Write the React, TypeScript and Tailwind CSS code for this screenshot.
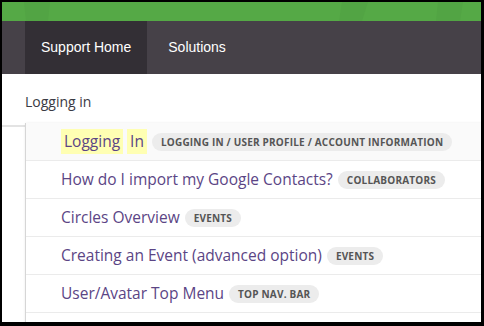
import React from "react";

const results = [
  { title: ["Logging", "In"], tag: "LOGGING IN / USER PROFILE / ACCOUNT INFORMATION", active: true },
  { title: "How do I import my Google Contacts?", tag: "COLLABORATORS" },
  { title: "Circles Overview", tag: "EVENTS" },
  { title: "Creating an Event (advanced option)", tag: "EVENTS" },
  { title: "User/Avatar Top Menu", tag: "TOP NAV. BAR" },
];

function Tag({ label }: { label: string }) {
  return (
    <span className="ml-[5px] rounded-full bg-[#ececec] px-[9px] py-[2px] text-[10px] font-bold leading-[14px] tracking-[0.2px] text-[#555]">
      {label}
    </span>
  );
}

export default function App() {
  return (
    <div className="h-[326px] w-[484px] overflow-hidden border-b-[4px] border-l-2 border-r-[3px] border-t-2 border-black bg-white font-['Open_Sans',sans-serif]">
      {/* green band */}
      <div className="h-[19px] bg-[#55a946]">
        <svg width="479" height="19" className="block">
          <polygon points="22,0 48,0 46,19 24,19" fill="#52a444" />
          <polygon points="340,0 366,0 360,19 337,19" fill="#52a444" />
          <polygon points="436,0 461,0 458,19 434,19" fill="#52a444" />
        </svg>
      </div>

      {/* nav */}
      <nav className="flex h-[53px] bg-[#464148] pl-[23px] font-['Liberation_Sans',Arial,sans-serif] text-[14px] text-white">
        <a className="flex items-center bg-[#332f35] px-[16px]">Support Home</a>
        <a className="flex items-center px-[21px]">Solutions</a>
      </nav>

      {/* search */}
      <div className="relative">
        <div className="h-[53px] border-b-2 border-[#e3e3e3] pl-[23px] pt-[18px] text-[14px] leading-[20px] text-[#3a3a44]">
          Logging in
        </div>

        <ul className="absolute left-[23px] right-0 top-[49px] border-l border-[#d6d6d6] bg-white shadow-[1px_1px_3px_rgba(0,0,0,0.18)]">
          {results.map((r, i) => (
            <li
              key={i}
              className={`flex h-[38px] items-center border-b border-[#ebebeb] pl-[35px] text-[15.5px] text-[#5b4585] ${
                r.active ? "bg-[#fafafa]" : ""
              }`}
            >
              {Array.isArray(r.title) ? (
                <>
                  <span className="bg-[#ffffb3] px-[3px] py-[1px]">{r.title[0]}</span>
                  <span className="ml-[4px] bg-[#ffffb3] px-[3px] py-[1px]">{r.title[1]}</span>
                </>
              ) : (
                <span>{r.title}</span>
              )}
              <Tag label={r.tag} />
            </li>
          ))}
          <li className="h-[38px]" />
        </ul>
      </div>
    </div>
  );
}
